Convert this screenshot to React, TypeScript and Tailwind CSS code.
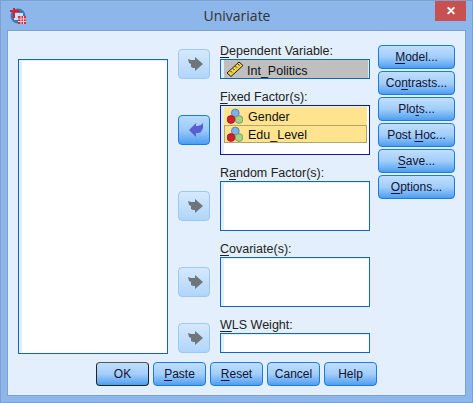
const font = "font-['Liberation_Sans',Arial,sans-serif]"

function NextArrow({ back }: { back?: boolean }) {
  return (
    <svg width="18" height="16" viewBox="0 0 18 16">
      {back ? (
        <path d="M4 8l7-7v3h2l3-1 2-2v5l-2 4-2 1h-3v4z" fill="#5a5fd0" />
      ) : (
        <path d="M3 3l3 1h4V1l8 7-8 7v-3H8L6 11V8L4 7z" fill="#70757c" />
      )}
    </svg>
  )
}

function ArrowButton({ active, className }: { active?: boolean; className?: string }) {
  return (
    <div
      className={`w-8 h-[30px] flex items-center justify-center rounded-[4px] border ${
        active
          ? 'border-[#1a7be0] bg-linear-to-b from-[#b9dafb] via-[#9ccbf9] to-[#4c9df0]'
          : 'border-[#9cc8f4] bg-linear-to-b from-[#d6e9fd] to-[#b0d5fa]'
      } ${className ?? ''}`}
    >
      <NextArrow back={active} />
    </div>
  )
}

function Btn({ label, u, def, className }: { label: string; u: number; def?: boolean; className?: string }) {
  return (
    <div
      className={`h-6 flex items-center justify-center rounded-[4px] border text-[12px] text-[#111133] bg-linear-to-b from-[#c0defc] via-[#a2cefa] to-[#4d9ef0] ${
        def ? 'border-[#222] border-t-[#555]' : 'border-[#1a7be0]'
      } ${className ?? ''}`}
    >
      {u >= 0 ? (
        <span>
          {label.slice(0, u)}
          <span className="underline underline-offset-2">{label[u]}</span>
          {label.slice(u + 1)}
        </span>
      ) : (
        label
      )}
    </div>
  )
}

function Label({ text, u }: { text: string; u: number }) {
  return (
    <div className="h-[14px] leading-[13px] text-[12.5px] text-[#222] whitespace-nowrap">
      {text.slice(0, u)}
      <span className="underline underline-offset-2">{text[u]}</span>
      {text.slice(u + 1)}
    </div>
  )
}

function Ruler() {
  return (
    <svg width="18" height="16" viewBox="0 0 18 16">
      <path d="M1 12 13 1l4 3.500L5 15.500z" fill="#f4cf4a" stroke="#222" strokeWidth="1" />
      <path d="M4.500 10l1.500 1.500M7 7.500 8.500 9M9.500 5.200 11 6.700M12 3l1.500 1.500" stroke="#222" strokeWidth="1" />
    </svg>
  )
}

function NominalIcon() {
  return (
    <svg width="16" height="16" viewBox="0 0 16 16">
      <circle cx="8.300" cy="5" r="3.900" fill="#7fb0e8" stroke="#4a7ab0" strokeWidth="0.800" />
      <circle cx="12" cy="11.500" r="3.900" fill="#a8d088" stroke="#6c9a4c" strokeWidth="0.800" />
      <circle cx="4" cy="11.500" r="3.900" fill="#d2202c" stroke="#9c1820" strokeWidth="0.800" />
    </svg>
  )
}

function VarRow({ name, boxed }: { name: string; boxed?: boolean }) {
  return (
    <div className={`h-[18px] flex items-center gap-[5px] pl-[2px] bg-[#ffe38f] border ${boxed ? 'border-[#b5a468]' : 'border-transparent'}`}>
      <NominalIcon />
      <span className="text-[12.5px] text-[#111] pt-[2px]">{name}</span>
    </div>
  )
}

function Box({ h, dark, children }: { h: string; dark?: boolean; children?: React.ReactNode }) {
  return (
    <div className={`${h} border ${dark ? 'border-[#0a18a8]' : 'border-[#1268b8]'} bg-white`}>
      <div className="h-full border-l-[3px] border-t border-[#e2eefb] pr-[2px]">{children}</div>
    </div>
  )
}

export default function App() {
  return (
    <div className={`w-[473px] h-[403px] bg-[#8db6ea] flex flex-col border border-[#7f9fcf] ${font}`}>
      <div className="h-[29px] shrink-0 flex items-start">
        <svg width="18" height="18" viewBox="0 0 18 18" className="ml-[8px] mt-[6px]">
          <circle cx="9" cy="9" r="7.500" fill="#3f78b4" />
          <path d="M5 6h9v7H5z" fill="#cfe0f2" />
          <path d="M5 1v10M1 4h10" stroke="#d8202c" strokeWidth="2" />
          <rect x="9" y="9" width="8" height="8" fill="#c8344c" />
          <path d="M9 12h8M9 14.500h8M12 9v8M14.500 9v8" stroke="#f4c8d0" strokeWidth="1" />
        </svg>
        <div className="flex-1 text-center text-[14px] leading-[29px] text-[#333] font-['Open_Sans',sans-serif] pl-[12px]">Univariate</div>
        <div className="w-[31px] h-5 mr-[6px] bg-[#c75050] flex items-center justify-center text-white text-[12px] font-bold">✕</div>
      </div>
      <div className="mx-[6px] h-[366px] bg-[#e3effc] border border-[#7f9fcf] pl-[10px] pt-[14px]">
        <div className="flex h-[310px]">
          <div className="w-[150px] mt-[14px] h-[295px] border border-[#1268b8] bg-white">
            <div className="h-full border-l-[3px] border-t border-[#e2eefb]" />
          </div>
          <div className="w-8 ml-[10px] mt-[4px] shrink-0">
            <ArrowButton />
            <ArrowButton active className="mt-9" />
            <ArrowButton className="mt-[46px]" />
            <ArrowButton className="mt-[46px]" />
            <ArrowButton className="mt-[26px]" />
          </div>
          <div className="w-[150px] ml-[10px] shrink-0">
            <Label text="Dependent Variable:" u={0} />
            <div className="h-5 border border-[#1268b8] bg-[#e2eefb] pl-[3px] pr-px">
              <div className="h-full bg-[#bfbfbf] flex items-center gap-[3px] pl-[2px]">
                <Ruler />
                <span className="text-[12.5px] text-[#111] pt-1">Int_Politics</span>
              </div>
            </div>
            <div className="mt-3"><Label text="Fixed Factor(s):" u={0} /></div>
            <Box h="h-[50px]" dark>
              <VarRow name="Gender" />
              <VarRow name="Edu_Level" boxed />
            </Box>
            <div className="mt-3"><Label text="Random Factor(s):" u={1} /></div>
            <Box h="h-[50px]" />
            <div className="mt-3"><Label text="Covariate(s):" u={0} /></div>
            <Box h="h-[50px]" />
            <div className="mt-3"><Label text="WLS Weight:" u={0} /></div>
            <Box h="h-5" />
          </div>
          <div className="w-[77px] ml-2 shrink-0 flex flex-col gap-[2px]">
            <Btn label="Model..." u={0} />
            <Btn label="Contrasts..." u={2} />
            <Btn label="Plots..." u={3} />
            <Btn label="Post Hoc..." u={5} />
            <Btn label="Save..." u={0} />
            <Btn label="Options..." u={0} />
          </div>
        </div>
        <div className="flex mt-[7px] ml-[78px] gap-1">
          <Btn label="OK" u={-1} def className="w-[53px]" />
          <Btn label="Paste" u={0} className="w-[53px]" />
          <Btn label="Reset" u={0} className="w-[53px]" />
          <Btn label="Cancel" u={-1} className="w-[53px]" />
          <Btn label="Help" u={-1} className="w-[53px]" />
        </div>
      </div>
    </div>
  )
}
